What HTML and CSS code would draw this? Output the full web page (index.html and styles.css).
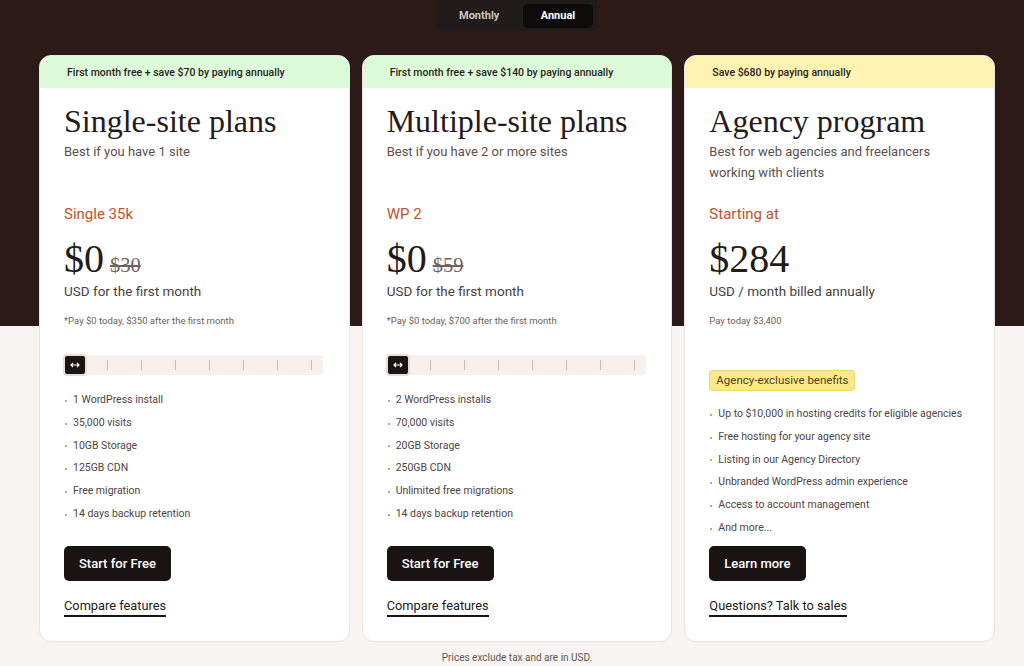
FILE: index.html
```html
<!DOCTYPE html>
<html lang="en">

<head>
    <meta charset="UTF-8">
    <meta name="viewport" content="width=device-width, initial-scale=1.0">
    <title>Pricing</title>
    <link rel="stylesheet" href="styles.css">
</head>

<body>
    <div class="pricing">
        <!-- Billing toggle -->
        <div class="billing-toggle">
            <span class="toggle-option">Monthly</span>
            <span class="toggle-option active">Annual</span>
        </div>

        <div class="plan-grid">
            <!-- Single site -->
            <div class="plan-card">
                <div class="plan-banner green">First month free + save $70 by paying annually</div>
                <div class="plan-body">
                    <h2 class="plan-title">Single-site plans</h2>
                    <p class="plan-sub">Best if you have 1 site</p>
                    <div class="plan-name">Single 35k</div>
                    <div class="plan-price">$0 <s class="old-price">$30</s></div>
                    <div class="price-note">USD for the first month</div>
                    <div class="pay-note">*Pay $0 today, $350 after the first month</div>
                    <div class="range">
                        <span class="range-thumb">
                            <svg width="10" height="6" viewBox="0 0 10 6"><path d="M1 3h8M3 1 1 3l2 2M7 1l2 2-2 2" fill="none" stroke="#fff" stroke-width="1.2"/></svg>
                        </span>
                        <span class="range-ticks">
                            <i></i><i></i><i></i><i></i><i></i><i></i><i></i>
                        </span>
                    </div>
                    <ul class="features">
                        <li>1 WordPress install</li>
                        <li>35,000 visits</li>
                        <li>10GB Storage</li>
                        <li>125GB CDN</li>
                        <li>Free migration</li>
                        <li>14 days backup retention</li>
                    </ul>
                    <div class="plan-footer">
                        <a class="btn" href="#">Start for Free</a>
                        <a class="plan-link" href="#">Compare features</a>
                    </div>
                </div>
            </div>

            <!-- Multiple site -->
            <div class="plan-card">
                <div class="plan-banner green">First month free + save $140 by paying annually</div>
                <div class="plan-body">
                    <h2 class="plan-title">Multiple-site plans</h2>
                    <p class="plan-sub">Best if you have 2 or more sites</p>
                    <div class="plan-name">WP 2</div>
                    <div class="plan-price">$0 <s class="old-price">$59</s></div>
                    <div class="price-note">USD for the first month</div>
                    <div class="pay-note">*Pay $0 today, $700 after the first month</div>
                    <div class="range">
                        <span class="range-thumb">
                            <svg width="10" height="6" viewBox="0 0 10 6"><path d="M1 3h8M3 1 1 3l2 2M7 1l2 2-2 2" fill="none" stroke="#fff" stroke-width="1.2"/></svg>
                        </span>
                        <span class="range-ticks">
                            <i></i><i></i><i></i><i></i><i></i><i></i><i></i>
                        </span>
                    </div>
                    <ul class="features">
                        <li>2 WordPress installs</li>
                        <li>70,000 visits</li>
                        <li>20GB Storage</li>
                        <li>250GB CDN</li>
                        <li>Unlimited free migrations</li>
                        <li>14 days backup retention</li>
                    </ul>
                    <div class="plan-footer">
                        <a class="btn" href="#">Start for Free</a>
                        <a class="plan-link" href="#">Compare features</a>
                    </div>
                </div>
            </div>

            <!-- Agency -->
            <div class="plan-card">
                <div class="plan-banner yellow">Save $680 by paying annually</div>
                <div class="plan-body">
                    <h2 class="plan-title">Agency program</h2>
                    <p class="plan-sub">Best for web agencies and freelancers working with clients</p>
                    <div class="plan-name">Starting at</div>
                    <div class="plan-price">$284</div>
                    <div class="price-note">USD / month billed annually</div>
                    <div class="pay-note">Pay today $3,400</div>
                    <span class="badge">Agency-exclusive benefits</span>
                    <ul class="features agency">
                        <li>Up to $10,000 in hosting credits for eligible agencies</li>
                        <li>Free hosting for your agency site</li>
                        <li>Listing in our Agency Directory</li>
                        <li>Unbranded WordPress admin experience</li>
                        <li>Access to account management</li>
                        <li>And more...</li>
                    </ul>
                    <div class="plan-footer">
                        <a class="btn" href="#">Learn more</a>
                        <a class="plan-link" href="#">Questions? Talk to sales</a>
                    </div>
                </div>
            </div>
        </div>

        <p class="tax-note">Prices exclude tax and are in USD.</p>
    </div>
</body>

</html>
```

FILE: styles.css
```css
body {
    margin: 0;
    font-family: Roboto, "Liberation Sans", sans-serif;
    color: #1f1716;
    background: linear-gradient(#2c1a19 0, #2c1a19 326px, #f8f4f1 326px);
    min-height: 666px;
}

.pricing {
    width: 956px;
    margin-left: 39px;
    display: flex;
    flex-direction: column;
    align-items: center;
}
/* Toggle */

.billing-toggle {
    display: flex;
    align-items: center;
    gap: 20px;
    width: 160px;
    height: 31px;
    box-sizing: border-box;
    padding: 0 4px 0 22px;
    background: #211b1b;
    border-radius: 0 0 6px 6px;
}

.toggle-option {
    font-size: 11px;
    font-weight: 700;
    color: #cbc3bf;
}

.toggle-option.active {
    color: #fff;
    background: #0e0b0b;
    border-radius: 5px;
    width: 70px;
    height: 24px;
    line-height: 24px;
    text-align: center;
    margin-left: auto;
}
/* Cards */

.plan-grid {
    display: grid;
    grid-template-columns: repeat(3, 1fr);
    gap: 12px;
    width: 100%;
    margin-top: 24px;
}

.plan-card {
    background: #fff;
    border: 1px solid #ece4df;
    border-radius: 12px;
    overflow: hidden;
    display: flex;
    flex-direction: column;
}

.plan-banner {
    height: 32px;
    line-height: 33px;
    padding-left: 27px;
    font-size: 10.5px;
    font-weight: 500;
    color: #2b2220;
}

.plan-banner.green {
    background: #dcfcd9;
}

.plan-banner.yellow {
    background: #fdf4b4;
}

.plan-body {
    flex: 1;
    display: flex;
    flex-direction: column;
    align-items: flex-start;
    padding: 0 25px 24px 24px;
}

.plan-title {
    margin: 15px 0 0;
    font-family: "Liberation Serif", serif;
    font-weight: 400;
    font-size: 32px;
    line-height: 36px;
    color: #231a19;
}

.plan-sub {
    margin: 2px 0 0;
    min-height: 42px;
    font-size: 13px;
    line-height: 21px;
    color: #5b504d;
}

.plan-name {
    margin-top: 21px;
    font-size: 15px;
    line-height: 20px;
    color: #c4502b;
}

.plan-price {
    display: flex;
    align-items: baseline;
    gap: 6px;
    height: 44px;
    margin-top: 13px;
    font-family: "Liberation Serif", serif;
    font-size: 40px;
    line-height: 44px;
    color: #231a19;
}

.old-price {
    font-size: 20.5px;
    line-height: 1;
    color: #6e6361;
}

.price-note {
    font-size: 13.5px;
    line-height: 20px;
    color: #4a403e;
}

.pay-note {
    margin-top: 12px;
    font-size: 9.5px;
    line-height: 16px;
    color: #6b605d;
}
/* Range slider */

.range {
    display: flex;
    align-items: center;
    width: 259px;
    height: 20px;
    margin-top: 26px;
    background: #f7f0ec;
    border-radius: 3px;
}

.range-thumb {
    display: flex;
    align-items: center;
    justify-content: center;
    width: 20px;
    height: 18px;
    background: #1b1414;
    border: 2px solid #e8ddd7;
    border-radius: 4px;
    margin-left: -1px;
}

.range-ticks {
    display: flex;
    gap: 33px;
    padding-left: 20px;
}

.range-ticks i {
    width: 1px;
    height: 10px;
    background: #c9bcb6;
}
/* Features */

.features {
    list-style: none;
    margin: 14px 0 0;
    padding: 0;
    font-size: 10.5px;
    line-height: 22.8px;
    color: #4e4442;
}

.features li {
    display: flex;
    align-items: center;
}

.features li::before {
    content: "";
    width: 2px;
    height: 2px;
    margin: 1px 6px 0 1px;
    border-radius: 50%;
    background: #958a86;
}

.features.agency {
    margin-top: 12px;
}

.badge {
    margin-top: 41px;
    padding: 0 6px;
    height: 19px;
    line-height: 19px;
    font-size: 11.5px;
    color: #4f3f1b;
    background: #fde98c;
    border: 1px solid #efd772;
    border-radius: 3px;
}
/* Footer */

.plan-footer {
    margin-top: auto;
    padding-top: 6px;
    display: flex;
    flex-direction: column;
    align-items: flex-start;
}

.btn {
    display: inline-block;
    height: 35px;
    line-height: 35px;
    padding: 0 15px;
    font-size: 13px;
    font-weight: 500;
    color: #fff;
    background: #1a1313;
    border-radius: 5px;
    text-decoration: none;
}

.plan-link {
    margin-top: 16px;
    font-size: 12.8px;
    line-height: 18px;
    color: #231a19;
    text-decoration: none;
    border-bottom: 2px solid #1a1313;
}

.tax-note {
    margin: 10px 0 0;
    font-size: 10px;
    color: #5f5552;
}
```
